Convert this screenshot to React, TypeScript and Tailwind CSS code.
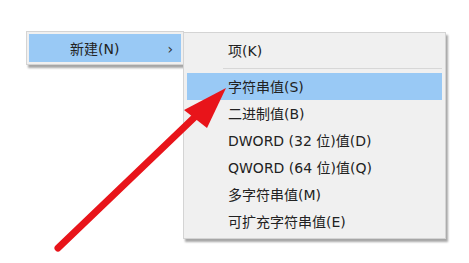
import React from "react";

const font = { fontFamily: '"DejaVu Sans", "Noto Sans CJK SC", sans-serif' };

const items = [
  "字符串值(S)",
  "二进制值(B)",
  "DWORD (32 位)值(D)",
  "QWORD (64 位)值(Q)",
  "多字符串值(M)",
  "可扩充字符串值(E)",
];

export default function App() {
  return (
    <div className="relative w-[469px] h-[263px] bg-white overflow-hidden text-[14px] text-[#222]" style={font}>
      {/* left menu */}
      <div className="absolute left-[26px] top-[31px] w-[158px] border border-[#d4d4d4] bg-[#f0f0f0] p-[2px] shadow-[2px_3px_2px_rgba(0,0,0,0.35)]">
        <div className="flex items-center h-[28px] pt-[3px] bg-[#99c9f5] pl-[41px] pr-[8px]">
          <span className="flex-1">新建(N)</span>
          <span className="text-[#333] text-[14px]">›</span>
        </div>
      </div>
      {/* right menu */}
      <div className="absolute left-[183px] top-[32px] w-[263px] border border-[#d4d4d4] bg-[#f0f0f0] px-[3px] pt-[4px] pb-[3px] shadow-[2px_3px_2px_rgba(0,0,0,0.35)]">
        <div className="flex items-center h-[27px] pt-[2px] pl-[41px]">项(K)</div>
        <div className="h-px bg-[#d7d7d7] ml-[36px] my-[4px]" />
        {items.map((t, i) => (
          <div
            key={t}
            className={
              "flex items-center h-[27px] pt-[2px] pl-[41px] " + (i === 0 ? "bg-[#99c9f5]" : "")
            }
          >
            {t}
          </div>
        ))}
      </div>
      {/* red arrow */}
      <svg className="absolute left-0 top-0" width="469" height="263" viewBox="0 0 469 263">
        <line x1="58" y1="248" x2="200" y2="112" stroke="#e8141a" strokeWidth="7" strokeLinecap="round" />
        <polygon points="226,88 184,110 207,128" fill="#e8141a" />
      </svg>
    </div>
  );
}
